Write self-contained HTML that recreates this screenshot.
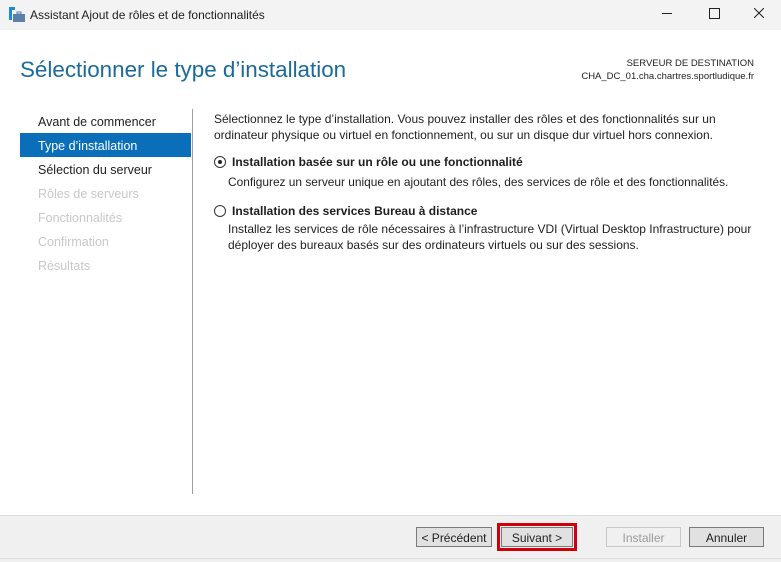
<!DOCTYPE html><html><head><meta charset="utf-8"><style>
body{margin:0;width:781px;height:561px;background:#fff;font-family:"Liberation Sans",sans-serif;font-size:12px;color:#1e1e1e;position:relative;overflow:hidden}
.a{position:absolute;white-space:nowrap}
.btn{position:absolute;top:527px;height:20px;border:1px solid #7a7a7a;background:#e1e1e1;font-size:12px;text-align:center;line-height:20px;box-sizing:border-box}
.nav{position:absolute;left:38px;font-size:12.5px}
</style></head><body>
<div class="a" style="left:0;top:0;width:781px;height:30px;background:#f3f3f3"></div>
<svg class="a" style="left:8px;top:6px" width="18" height="18"><rect x="1" y="1" width="6" height="3" fill="#1e88e5"/><rect x="1" y="4" width="3" height="10" fill="#1e88e5"/><rect x="5" y="8" width="12" height="8" fill="#5a7fa8"/><rect x="9" y="6" width="4" height="2" fill="none" stroke="#5a7fa8"/></svg>
<div class="a" style="left:30px;top:8px;font-size:12px">Assistant Ajout de rôles et de fonctionnalités</div>
<div class="a" style="left:662px;top:13px;width:10px;height:1px;background:#222"></div>
<div class="a" style="left:709px;top:8px;width:9px;height:9px;border:1px solid #222"></div>
<svg class="a" style="left:754px;top:8px" width="10" height="10"><path d="M0 0L10 10M10 0L0 10" stroke="#222" stroke-width="1"/></svg>
<div class="a" style="left:20px;top:57px;font-size:22.4px;color:#1a6a9a">Sélectionner le type d’installation</div>
<div class="a" style="right:27px;top:57px;font-size:9.5px;text-align:right;line-height:13px">SERVEUR DE DESTINATION<br>CHA_DC_01.cha.chartres.sportludique.fr</div>
<div class="a" style="left:20px;top:133px;width:171px;height:24px;background:#0a6fb8"></div>
<div class="nav" style="top:115px">Avant de commencer</div>
<div class="nav" style="top:139px;color:#fff">Type d’installation</div>
<div class="nav" style="top:163px">Sélection du serveur</div>
<div class="nav" style="top:187px;color:#c8c8c8">Rôles de serveurs</div>
<div class="nav" style="top:211px;color:#c8c8c8">Fonctionnalités</div>
<div class="nav" style="top:235px;color:#c8c8c8">Confirmation</div>
<div class="nav" style="top:259px;color:#c8c8c8">Résultats</div>
<div class="a" style="left:192px;top:109px;width:1px;height:385px;background:#a0a0a0"></div>
<div class="a" style="left:214px;top:111px;font-size:12px;line-height:16px">Sélectionnez le type d’installation. Vous pouvez installer des rôles et des fonctionnalités sur un<br>ordinateur physique ou virtuel en fonctionnement, ou sur un disque dur virtuel hors connexion.</div>
<div class="a" style="left:214px;top:156px;width:10px;height:10px;border:1px solid #333;border-radius:50%"></div>
<div class="a" style="left:218px;top:160px;width:4px;height:4px;background:#222;border-radius:50%"></div>
<div class="a" style="left:232px;top:155px;font-weight:bold">Installation basée sur un rôle ou une fonctionnalité</div>
<div class="a" style="left:228px;top:175px;font-size:11.9px">Configurez un serveur unique en ajoutant des rôles, des services de rôle et des fonctionnalités.</div>
<div class="a" style="left:214px;top:205px;width:10px;height:10px;border:1px solid #333;border-radius:50%"></div>
<div class="a" style="left:232px;top:204px;font-weight:bold">Installation des services Bureau à distance</div>
<div class="a" style="left:228px;top:221px;line-height:16px">Installez les services de rôle nécessaires à l’infrastructure VDI (Virtual Desktop Infrastructure) pour<br>déployer des bureaux basés sur des ordinateurs virtuels ou sur des sessions.</div>
<div class="a" style="left:0;top:515px;width:781px;height:46px;background:#f0f0f0;border-top:1px solid #dcdcdc"></div>
<div class="a" style="left:0;top:558px;width:781px;height:1px;background:#dcdcdc"></div>
<div class="btn" style="left:416px;width:76px">&lt; Précédent</div>
<div class="a" style="left:497px;top:523px;width:80px;height:28px;border:3px solid #d0000a;box-sizing:border-box"></div>
<div class="btn" style="left:501px;width:72px">Suivant &gt;</div>
<div class="btn" style="left:606px;width:75px;border-color:#c8c8c8;background:#f0f0f0;color:#9a9a9a">Installer</div>
<div class="btn" style="left:689px;width:75px">Annuler</div>
</body></html>
